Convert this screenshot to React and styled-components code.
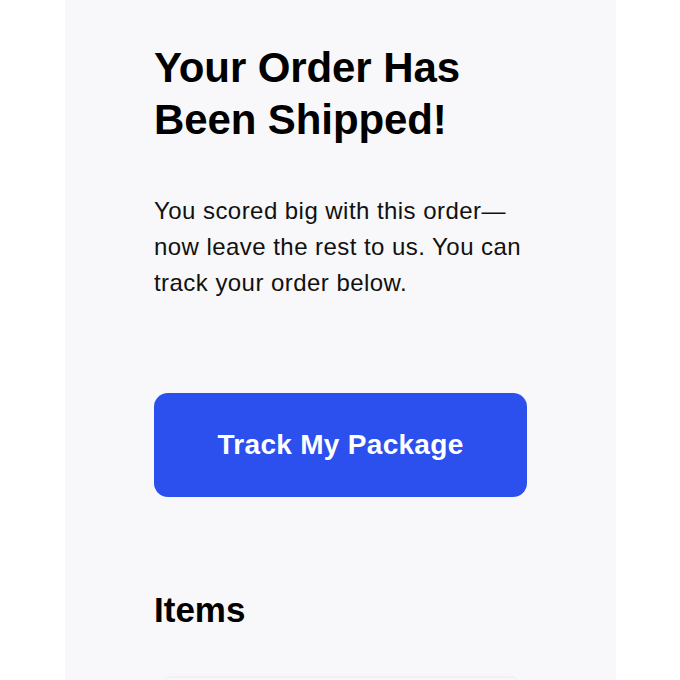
import styled, { createGlobalStyle } from 'styled-components';

const GlobalStyle = createGlobalStyle`
  html, body {
    margin: 0;
    padding: 0;
    background: #ffffff;
  }
  body {
    font-family: 'Liberation Sans', Arial, sans-serif;
    color: #000;
  }
`;

const Page = styled.div`
  width: 680px;
  height: 680px;
  overflow: hidden;
  display: flex;
  align-items: flex-start;
`;

const Panel = styled.main`
  margin-left: 65px;
  width: 551px;
  flex-shrink: 0;
  background: #f8f8fa;
  padding: 42px 89px 40px;
  box-sizing: border-box;
  display: flex;
  flex-direction: column;

  & > * {
    flex-shrink: 0;
  }
`;

const Title = styled.h1`
  margin: 0;
  font-size: 42px;
  line-height: 52px;
  font-weight: 700;
  letter-spacing: -0.1px;
`;

const Intro = styled.p`
  margin: 47px 0 0;
  font-size: 24px;
  line-height: 36px;
  letter-spacing: 0.45px;
  color: #111;
`;

const TrackButton = styled.a`
  margin-top: 92px;
  height: 104px;
  border-radius: 14px;
  background: #2b50ee;
  color: #fff;
  display: flex;
  align-items: center;
  justify-content: center;
  font-size: 28px;
  font-weight: 700;
  letter-spacing: 0.3px;
  text-decoration: none;
  cursor: pointer;
`;

const SectionTitle = styled.h2`
  margin: 93px 0 0;
  font-size: 35px;
  line-height: 40px;
  font-weight: 700;
  letter-spacing: 0;
`;

const ItemCard = styled.div`
  margin: 47px 10px 0;
  height: 120px;
  background: #f8f8fa;
  border-top: 1px solid #eceef2;
  border-radius: 6px 6px 0 0;
  box-shadow: 0 -1px 3px rgba(0, 0, 0, 0.03);
`;

export default function App() {
  return (
    <>
      <GlobalStyle />
      <Page>
        <Panel>
          <Title>
            Your Order Has
            <br />
            Been Shipped!
          </Title>
          <Intro>
            You scored big with this order—
            <br />
            now leave the rest to us. You can
            <br />
            track your order below.
          </Intro>
          <TrackButton>Track My Package</TrackButton>
          <SectionTitle>Items</SectionTitle>
          <ItemCard />
        </Panel>
      </Page>
    </>
  );
}
